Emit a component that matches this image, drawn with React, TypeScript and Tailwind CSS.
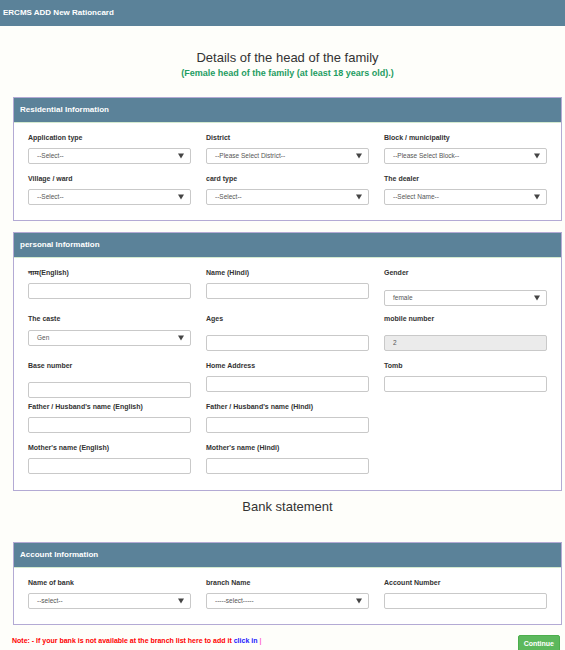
import React from 'react';

const font = { fontFamily: '"Liberation Sans", Arial, "Noto Sans", sans-serif' };

interface FieldProps {
  label: string;
  kind?: 'select' | 'input';
  value?: string;
  offset?: string;
  disabled?: boolean;
}

const Arrow = () => (
  <svg width="6" height="6" viewBox="0 0 6 6" className="absolute right-[6px] top-[4px]">
    <path d="M0 0.5 H6 L3 5.5 Z" fill="#444" />
  </svg>
);

const Field: React.FC<FieldProps> = ({ label, kind = 'input', value = '', offset = 'mt-[5px]', disabled }) => (
  <div className="flex flex-col">
    <label className="text-[7px] leading-[10px] font-bold text-[#333]">{label}</label>
    <div
      className={`relative h-[16px] rounded-[2px] border border-[#c9c9c9] ${disabled ? 'bg-[#ebebeb]' : 'bg-white'} ${offset}`}
    >
      <span className="absolute left-[8px] top-0 text-[6.5px] leading-[14px] text-[#555]">{value}</span>
      {kind === 'select' && <Arrow />}
    </div>
  </div>
);

const Panel: React.FC<{ title: string; body: string; children: React.ReactNode; className?: string }> = ({
  title,
  body,
  children,
  className = '',
}) => (
  <section className={`ml-[13px] mr-[3px] border border-[#b3aad4] bg-white ${className}`}>
    <div className="h-[25px] bg-[#5b8299] border-b border-[#d4ead0] px-[6px] flex items-center">
      <h3 className="text-[8px] font-bold text-white">{title}</h3>
    </div>
    <div className={`px-[14px] ${body}`}>{children}</div>
  </section>
);

export default function App() {
  return (
    <div className="w-[565px] h-[650px] overflow-hidden bg-[#fefefa]" style={font}>
      {/* Top bar */}
      <header className="h-[26px] bg-[#5b8299] px-[3px] flex items-center">
        <h1 className="text-[8px] font-bold text-white">ERCMS ADD New Rationcard</h1>
      </header>

      <div className="text-center pl-[10px] mt-[23px] mb-[17px]">
        <h2 className="text-[13px] leading-[17px] text-[#333]">Details of the head of the family</h2>
        <p className="text-[9px] leading-[14px] font-bold text-[#1f9d62]">
          (Female head of the family (at least 18 years old).)
        </p>
      </div>

      {/* Residential Information */}
      <Panel title="Residential Information" body="pt-[10px] pb-[15px]">
        <div className="grid grid-cols-3 gap-x-[15px]">
          <Field label="Application type" kind="select" value="--Select--" />
          <Field label="District" kind="select" value="--Please Select District--" />
          <Field label="Block / municipality" kind="select" value="--Please Select Block--" />
        </div>
        <div className="grid grid-cols-3 gap-x-[15px] mt-[10px]">
          <Field label="Village / ward" kind="select" value="--Select--" />
          <Field label="card type" kind="select" value="--Select--" />
          <Field label="The dealer" kind="select" value="--Select Name--" />
        </div>
      </Panel>

      {/* Personal Information */}
      <Panel title="personal Information" body="pt-[10px] pb-[16px]" className="mt-[11px]">
        <div className="grid grid-cols-3 gap-x-[15px] items-start">
          <Field label="नाम(English)" />
          <Field label="Name (Hindi)" />
          <Field label="Gender" kind="select" value="female" offset="mt-[12px]" />
        </div>
        <div className="grid grid-cols-3 gap-x-[15px] items-start mt-[8px]">
          <Field label="The caste" kind="select" value="Gen" offset="mt-[6px]" />
          <Field label="Ages" offset="mt-[11px]" />
          <Field label="mobile number" value="2" offset="mt-[11px]" disabled />
        </div>
        <div className="grid grid-cols-3 gap-x-[15px] items-start mt-[10px]">
          <Field label="Base number" offset="mt-[11px]" />
          <Field label="Home Address" />
          <Field label="Tomb" />
        </div>
        <div className="grid grid-cols-3 gap-x-[15px] items-start mt-[4px]">
          <Field label="Father / Husband's name (English)" />
          <Field label="Father / Husband's name (Hindi)" />
        </div>
        <div className="grid grid-cols-3 gap-x-[15px] items-start mt-[10px]">
          <Field label="Mother's name (English)" />
          <Field label="Mother's name (Hindi)" />
        </div>
      </Panel>

      <h2 className="text-center pl-[10px] text-[13px] leading-[16px] text-[#333] mt-[8px] mb-[27px]">
        Bank statement
      </h2>

      {/* Account Information */}
      <Panel title="Account Information" body="pt-[10px] pb-[15px]">
        <div className="grid grid-cols-3 gap-x-[15px] items-start">
          <Field label="Name of bank" kind="select" value="--select--" />
          <Field label="branch Name" kind="select" value="-----select-----" />
          <Field label="Account Number" />
        </div>
      </Panel>

      <div className="flex justify-between items-start pl-[12px] pr-[5px] mt-[10px]">
        <p className="text-[7px] leading-[10px] font-bold text-[#ff0000] mt-[1px]">
          Note: - If your bank is not available at the branch list here to add it{' '}
          <span className="text-[#1a1aff]">click in</span> <span className="text-[#ff66cc]">|</span>
        </p>
        <button className="h-[18px] px-[5px] rounded-[2px] bg-[#5cb85c] border border-[#4cae4c] text-white text-[7px] font-bold">
          Continue
        </button>
      </div>
    </div>
  );
}
